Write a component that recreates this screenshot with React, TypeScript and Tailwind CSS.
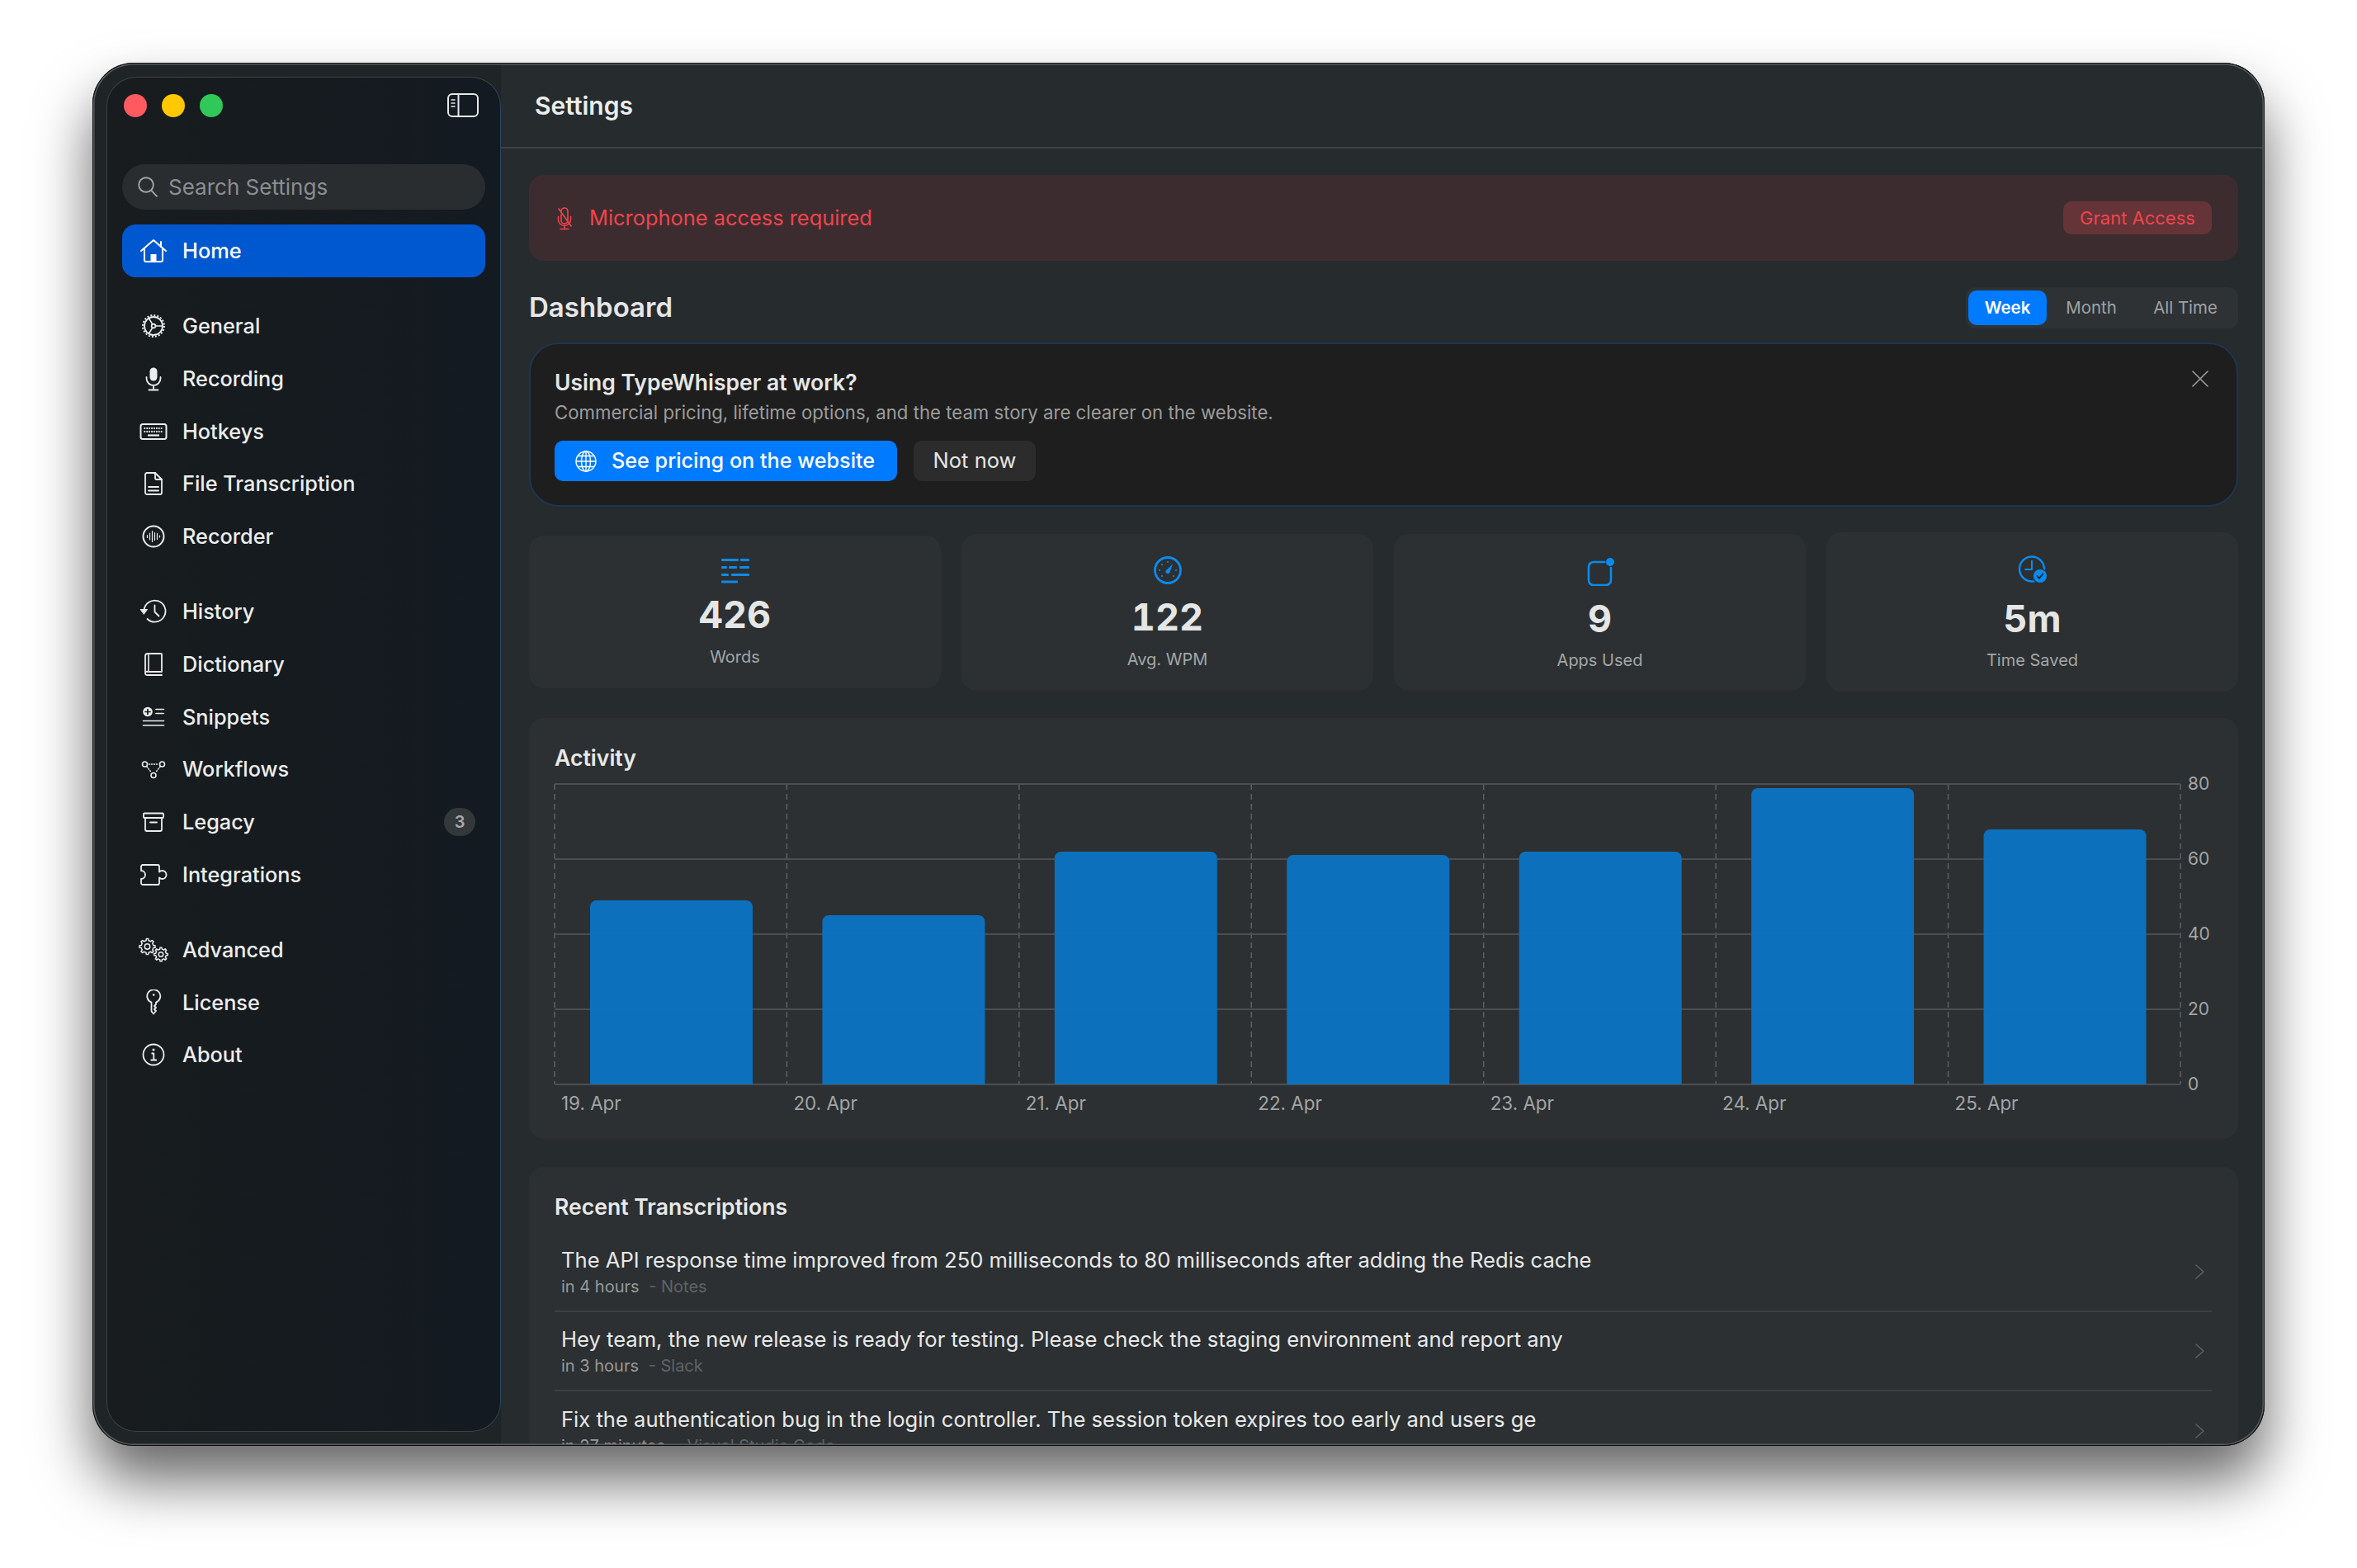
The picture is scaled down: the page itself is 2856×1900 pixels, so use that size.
import type { ReactNode } from "react";

type IconProps = { children: ReactNode };

// SF-symbol style glyphs, all drawn on the same 36x32 canvas
function Glyph({ children }: IconProps) {
  return (
    <svg
      viewBox="0 0 36 32"
      width={36}
      height={32}
      fill="none"
      stroke="currentColor"
      strokeWidth={2}
      strokeLinecap="round"
      strokeLinejoin="round"
      className="shrink-0"
    >
      {children}
    </svg>
  );
}

function gearPath(cx: number, cy: number, outer: number, inner: number, teeth: number) {
  const pts: string[] = [];
  const step = (Math.PI * 2) / teeth;
  for (let i = 0; i < teeth; i++) {
    const a = i * step;
    const corners = [
      [inner, a - step * 0.5],
      [inner, a - step * 0.27],
      [outer, a - step * 0.16],
      [outer, a + step * 0.16],
      [inner, a + step * 0.27],
    ];
    corners.forEach(([r, t]) => {
      pts.push(`${(cx + r * Math.cos(t)).toFixed(2)} ${(cy + r * Math.sin(t)).toFixed(2)}`);
    });
  }
  return `M${pts.join("L")}Z`;
}

const HomeIcon = () => (
  <Glyph>
    <path d="M3 16 18 3l15 13" />
    <path d="M27 5v6" />
    <path d="M7 13v14a2 2 0 0 0 2 2h18a2 2 0 0 0 2-2V13" />
    <rect x="14.5" y="20" width="7" height="9" fill="currentColor" stroke="none" />
  </Glyph>
);
const GeneralIcon = () => (
  <Glyph>
    <circle cx="18" cy="16" r="11" strokeWidth="1.8" />
    <circle cx="18" cy="16" r="13" strokeWidth="2" strokeDasharray="2 2.08" strokeLinecap="butt" />
    <path d="M20.4 16H29M16.8 13.9 12.5 7M16.8 18.1 12.5 25" strokeWidth="1.6" />
    <circle cx="18" cy="16" r="2.4" strokeWidth="1.6" />
  </Glyph>
);
const MicIcon = () => (
  <Glyph>
    <rect x="13.5" y="2.5" width="9" height="16" rx="4.5" fill="currentColor" stroke="none" />
    <path d="M9.5 14v1.5a8.5 8.5 0 0 0 17 0V14M18 24v5M12.5 29.5h11" strokeWidth="1.8" />
  </Glyph>
);
const KeyboardIcon = () => (
  <Glyph>
    <rect x="2.5" y="7" width="31" height="18" rx="2.5" />
    <path d="M6.5 12h23M6.5 16h23" strokeWidth="2.2" strokeDasharray="1.7 1.2" strokeLinecap="butt" />
    <path d="M11 20.5h14" strokeWidth="2.2" strokeLinecap="butt" />
  </Glyph>
);
const DocIcon = () => (
  <Glyph>
    <path d="M10 3h10l8 8v16a2 2 0 0 1-2 2H10a2 2 0 0 1-2-2V5a2 2 0 0 1 2-2Z" strokeWidth="1.8" />
    <path d="M20 3v6a2 2 0 0 0 2 2h6M12 20h12M12 24.5h12" strokeWidth="1.8" />
  </Glyph>
);
const RecorderIcon = () => (
  <Glyph>
    <circle cx="18" cy="16" r="12.5" />
    <path d="M10.5 14.5v3M13.5 12v8M16.5 9.5v13M19.5 11.5v9M22.5 12.5v7M25.5 15v2" strokeWidth="1.2" />
  </Glyph>
);
const HistoryIcon = () => (
  <Glyph>
    <path d="M6.5 15a13 13 0 1 1 4 10" strokeWidth="1.8" />
    <path d="M2.5 13.5h8l-4 5.5Z" fill="currentColor" strokeWidth="1" />
    <path d="M19.5 8.5v8l5 5" strokeWidth="1.8" />
  </Glyph>
);
const BookIcon = () => (
  <Glyph>
    <path d="M8 26V6a3 3 0 0 1 3-3h16a1 1 0 0 1 1 1v21H11a2.2 2.2 0 0 0-3 1Zm0 0a2.5 2.5 0 0 0 3 3h17" strokeWidth="1.8" />
    <path d="M12 3v22" strokeWidth="1.6" />
  </Glyph>
);
const SnippetsIcon = () => (
  <Glyph>
    <circle cx="11" cy="9.5" r="5.8" fill="currentColor" stroke="none" />
    <path d="M11 6.5v6M8 9.5h6" stroke="#161b1e" strokeWidth="1.7" />
    <path d="M21 6.5h9.5M21 11.5h9.5M5.5 20.5h25M5.5 26h25" strokeWidth="1.6" />
  </Glyph>
);
const WorkflowIcon = () => (
  <Glyph>
    <circle cx="7.5" cy="10" r="3" strokeWidth="1.6" />
    <circle cx="28.5" cy="10" r="3" strokeWidth="1.6" />
    <circle cx="18" cy="23.5" r="3" strokeWidth="1.6" />
    <path d="M12.5 10h11M10 13l5.5 7M26 13l-5.5 7" strokeWidth="1.5" strokeDasharray="1 2" />
  </Glyph>
);
const ArchiveIcon = () => (
  <Glyph>
    <rect x="6" y="5.5" width="24" height="5.5" rx="1" strokeWidth="1.8" />
    <path d="M8 11v14a2 2 0 0 0 2 2h16a2 2 0 0 0 2-2V11M14 16.5h8" strokeWidth="1.8" />
  </Glyph>
);
const PuzzleIcon = () => (
  <Glyph>
    <path d="M5 4h18a2 2 0 0 1 2 2v6.5a5 5 0 1 1 0 7V26a2 2 0 0 1-2 2H5a2 2 0 0 1-2-2v-5a5 5 0 0 0 0-10V6a2 2 0 0 1 2-2Z" strokeWidth="1.8" />
  </Glyph>
);
const GearsIcon = () => (
  <Glyph>
    <path d={gearPath(10.5, 12, 9.6, 7.4, 8)} strokeWidth="1.5" />
    <circle cx="10.5" cy="12" r="3.2" strokeWidth="1.5" />
    <path d={gearPath(27, 21.5, 8.4, 6.4, 8)} strokeWidth="1.5" />
    <circle cx="27" cy="21.5" r="2.8" strokeWidth="1.5" />
  </Glyph>
);
const KeyIcon = () => (
  <Glyph>
    <path d="M15.5 15.6a8 8 0 1 1 5.5 0V18l-2 2 2 2-2 2 2 2-3 3.5-2.5-3Z" strokeWidth="1.8" />
    <circle cx="18.2" cy="6.5" r="1.3" fill="currentColor" stroke="none" />
  </Glyph>
);
const InfoIcon = () => (
  <Glyph>
    <circle cx="18" cy="16" r="12.5" strokeWidth="1.8" />
    <circle cx="18" cy="10" r="1.5" fill="currentColor" stroke="none" />
    <path d="M15.5 14.5h2.8v8M14.5 22.5h7.5" strokeWidth="1.8" strokeLinecap="butt" />
  </Glyph>
);

function SidebarToggle() {
  return (
    <svg viewBox="0 0 38 30" width={38} height={30} fill="none" stroke="#e6e7e8" strokeWidth={2}>
      <rect x="1" y="1" width="36" height="27" rx="5" />
      <path d="M13.5 1v27" />
      <path d="M4.5 8h5M4.5 12h5M4.5 16h5" strokeWidth="1.5" />
    </svg>
  );
}

function WordsIcon() {
  const rows: [number, number, number][] = [
    [2, 0, 21],
    [2, 23, 34],
    [11, 0, 7],
    [11, 9, 19],
    [11, 22, 34],
    [20, 0, 9],
    [20, 12, 34],
    [28.5, 0, 20],
  ];
  return (
    <svg viewBox="0 0 34 32" width={34} height={32} fill="#0f8ae6">
      {rows.map(([y, a, b]) => (
        <rect key={`${y}-${a}`} x={a} y={y} width={b - a} height={3} rx={1} />
      ))}
    </svg>
  );
}

function GaugeIcon() {
  return (
    <svg viewBox="0 0 34 34" width={34} height={34} fill="none" stroke="#0a8bf0" strokeWidth={2.8}>
      <circle cx="17" cy="17" r="15.5" />
      <path d="M14.5 19.5c-.6-1 .1-2 .8-2.8L23 9.5 19.3 20c-.8 1.5-3.6 1.6-4.8-.5Z" fill="#0a8bf0" stroke="none" />
      <g fill="#0a8bf0" stroke="none">
        <circle cx="17" cy="7" r="1.1" />
        <circle cx="10" cy="10" r="1.1" />
        <circle cx="7" cy="17" r="1.1" />
        <circle cx="27" cy="17" r="1.1" />
        <circle cx="10" cy="24" r="1.1" />
        <circle cx="24" cy="24" r="1.1" />
      </g>
    </svg>
  );
}

function AppsIcon() {
  return (
    <svg viewBox="0 0 34 34" width={34} height={34} fill="none" stroke="#0a8bf0" strokeWidth={2.6} strokeLinecap="round">
      <path d="M22 5H9a6 6 0 0 0-6 6v16a6 6 0 0 0 6 6h15a6 6 0 0 0 6-6V12" />
      <circle cx="29" cy="5" r="5" fill="#0a8bf0" stroke="none" />
    </svg>
  );
}

function ClockCheckIcon() {
  return (
    <svg viewBox="0 0 36 34" width={36} height={34} fill="none" stroke="#0a8bf0" strokeWidth={2.4} strokeLinecap="round" strokeLinejoin="round">
      <circle cx="17" cy="16.5" r="15" />
      <path d="M17 6.5V17H9" strokeWidth="2" />
      <circle cx="27" cy="25" r="9.5" fill="#2c3032" stroke="none" />
      <circle cx="27" cy="25" r="8" fill="#0a8bf0" stroke="none" />
      <path d="m23.5 25 2.6 2.8 4.2-5.4" stroke="#1d2a36" strokeWidth="1.8" />
    </svg>
  );
}

function MicSlash() {
  return (
    <svg viewBox="0 0 24 30" width={24} height={30} fill="none" stroke="#f0444c" strokeWidth={1.6} strokeLinecap="round" className="shrink-0">
      <path d="M8 8V7a4 4 0 0 1 8 0v11a4 4 0 0 1-8 0v-7" />
      <path d="M4.5 13.5V17a7.5 7.5 0 0 0 15 0v-3.5M12 24.5V28M7 28.5h10" />
      <path d="m5 4 15 21" />
    </svg>
  );
}

function GlobeIcon() {
  return (
    <svg viewBox="0 0 26 26" width={26} height={26} fill="none" stroke="#fff" strokeWidth={1.4} className="shrink-0">
      <circle cx="13" cy="13" r="12" />
      <ellipse cx="13" cy="13" rx="5.5" ry="12" />
      <path d="M13 1v24M1 13h24M3 6.5h20M3 19.5h20" />
    </svg>
  );
}

const NAV_GROUPS: { label: string; icon: ReactNode; badge?: string }[][] = [
  [
    { label: "General", icon: <GeneralIcon /> },
    { label: "Recording", icon: <MicIcon /> },
    { label: "Hotkeys", icon: <KeyboardIcon /> },
    { label: "File Transcription", icon: <DocIcon /> },
    { label: "Recorder", icon: <RecorderIcon /> },
  ],
  [
    { label: "History", icon: <HistoryIcon /> },
    { label: "Dictionary", icon: <BookIcon /> },
    { label: "Snippets", icon: <SnippetsIcon /> },
    { label: "Workflows", icon: <WorkflowIcon /> },
    { label: "Legacy", icon: <ArchiveIcon />, badge: "3" },
    { label: "Integrations", icon: <PuzzleIcon /> },
  ],
  [
    { label: "Advanced", icon: <GearsIcon /> },
    { label: "License", icon: <KeyIcon /> },
    { label: "About", icon: <InfoIcon /> },
  ],
];

function Sidebar() {
  return (
    <aside className="ml-[17px] mt-[17px] flex h-[1642px] w-[478px] shrink-0 flex-col rounded-[36px] border border-[#3b4146] border-r-[#2c4560] bg-linear-to-r from-[#181c1e] to-[#131a21] px-[18px] pt-[19px]">
      <div className="flex h-[30px] items-center justify-between pl-[2px] pr-[8px]">
        <div className="flex gap-[18px]">
          <span className="h-[28px] w-[28px] rounded-full bg-[#ff5a5f]" />
          <span className="h-[28px] w-[28px] rounded-full bg-[#ffc800]" />
          <span className="h-[28px] w-[28px] rounded-full bg-[#30c859]" />
        </div>
        <SidebarToggle />
      </div>

      <div className="mt-[56px] flex h-[55px] items-center gap-[13px] rounded-full bg-[#2a2d30] pl-[19px] text-[26px] text-[#8b8e90]">
        <svg viewBox="0 0 24 25" width={24} height={25} fill="none" stroke="#a3a5a7" strokeWidth={1.9} strokeLinecap="round">
          <circle cx="10" cy="10" r="8.8" />
          <path d="m16.5 16.8 6.5 7" />
        </svg>
        <span>Search Settings</span>
      </div>

      <div className="mt-[18px] flex h-[64px] items-center gap-[17px] rounded-[16px] bg-[#0058d0] pl-[20px] text-[25.4px] font-medium text-white">
        <HomeIcon />
        <span>Home</span>
      </div>

      {NAV_GROUPS.map((group) => (
        <nav key={group[0].label} className="mt-[27.5px] flex flex-col">
          {group.map((item) => (
            <div key={item.label} className="flex h-[63.7px] items-center gap-[17px] pl-[20px] pr-[12px] text-[25.3px] font-medium text-[#eceeee]">
              {item.icon}
              <span>{item.label}</span>
              {item.badge ? (
                <span className="ml-auto flex h-[34px] w-[38px] items-center justify-center rounded-full bg-[#33383b] text-[20px] font-semibold text-[#a9abad]">
                  {item.badge}
                </span>
              ) : null}
            </div>
          ))}
        </nav>
      ))}
    </aside>
  );
}

function StatCard({
  icon,
  value,
  label,
  shell,
  iconBox,
  valueGap,
  labelGap,
}: {
  icon: ReactNode;
  value: string;
  label: string;
  shell: string;
  iconBox: string;
  valueGap: string;
  labelGap: string;
}) {
  return (
    <div className={`flex flex-1 flex-col items-center rounded-[18px] bg-[#2c3032] ${shell}`}>
      <div className={`flex items-center justify-center ${iconBox}`}>{icon}</div>
      <div className={`h-[44px] text-[45px] font-bold leading-[44px] tabular-nums text-[#e5e6e6] ${valueGap}`}>{value}</div>
      <div className={`h-[30px] text-[20px] leading-[30px] text-[#a4a6a7] ${labelGap}`}>{label}</div>
    </div>
  );
}

const BAR_TOPS = [142, 160, 83, 87, 83, 6, 56];
const TICKS = ["80", "60", "40", "20", "0"];
const DAYS = ["19. Apr", "20. Apr", "21. Apr", "22. Apr", "23. Apr", "24. Apr", "25. Apr"];
const SLOT = 281.43;

function ActivityChart() {
  return (
    <div className="mt-[15px]">
      <div className="flex gap-[8px]">
        <svg viewBox="0 0 1972 366" width={1972} height={366} className="-ml-px shrink-0">
          {[0, 1, 2, 3, 4, 5, 6, 7].map((i) => (
            <line key={i} x1={1 + i * SLOT} x2={1 + i * SLOT} y1={1} y2={365} stroke="#5d6163" strokeWidth={1.5} strokeDasharray="7 5" />
          ))}
          {[0, 1, 2, 3, 4].map((i) => (
            <line key={i} x1={1} x2={1971} y1={1 + i * 91} y2={1 + i * 91} stroke="#4b4f52" strokeWidth={2} />
          ))}
          {BAR_TOPS.map((top, i) => {
            const x = 44 + i * SLOT;
            return (
              <path
                key={i}
                d={`M${x} 365V${top + 8}a8 8 0 0 1 8-8h181a8 8 0 0 1 8 8V365Z`}
                fill="#0c72c2"
                fillOpacity={0.96}
              />
            );
          })}
        </svg>
        <div className="-my-[14px] flex h-[394px] flex-col justify-between text-[21px] leading-[30px] text-[#a3a5a6]">
          {TICKS.map((tick) => (
            <span key={tick}>{tick}</span>
          ))}
        </div>
      </div>
      <div className="mt-[7px] flex text-[22.4px] leading-[30px] text-[#a3a5a6]">
        {DAYS.map((day) => (
          <span key={day} className="w-[281.43px] pl-[8px]">
            {day}
          </span>
        ))}
      </div>
    </div>
  );
}

const RECENT = [
  {
    text: "The API response time improved from 250 milliseconds to 80 milliseconds after adding the Redis cache",
    when: "in 4 hours",
    app: "Notes",
  },
  {
    text: "Hey team, the new release is ready for testing. Please check the staging environment and report any",
    when: "in 3 hours",
    app: "Slack",
  },
  {
    text: "Fix the authentication bug in the login controller. The session token expires too early and users ge",
    when: "in 27 minutes",
    app: "Visual Studio Code",
  },
];

export default function App() {
  return (
    <div className="h-[1900px] w-[2856px] overflow-hidden bg-white pl-[112px] pt-[76px] antialiased [font-family:Inter,sans-serif]">
      <div className="relative flex h-[1676px] w-[2632px] rounded-[50px] bg-[#1f2426] shadow-[0_42px_70px_rgba(0,0,0,0.6)]">
        <div className="flex h-full w-full overflow-hidden rounded-[50px]">
          <Sidebar />

          <main className="flex min-w-0 flex-1 flex-col bg-[#262b2e]">
            <header className="flex h-[104px] shrink-0 items-center border-b-2 border-[#3f4346] pl-[41px] pt-[2px] text-[30px] font-semibold text-[#eceded]">
              Settings
            </header>

            <div className="flex flex-col pl-[34px] pr-[32px] pt-[32px]">
              <div className="flex h-[104px] items-center rounded-[18px] bg-[#3d2c2f] pl-[31px] pr-[32px]">
                <MicSlash />
                <span className="ml-[18px] text-[25.4px] text-[#f0444c]">Microphone access required</span>
                <button className="ml-auto h-[40px] w-[180px] rounded-[10px] bg-[#653438] text-[22px] text-[#f0444c]">
                  Grant Access
                </button>
              </div>

              <div className="mt-[32px] flex h-[50px] items-center justify-between">
                <h1 className="text-[33px] font-semibold text-[#e5e6e6]">Dashboard</h1>
                <div className="flex h-[50px] w-[330px] items-center rounded-[12px] bg-[#2e3235] pl-[3px] text-[20.4px] text-[#a0a2a4]">
                  <span className="flex h-[42px] w-[95px] items-center justify-center rounded-[10px] bg-[#007aff] font-semibold text-white">Week</span>
                  <span className="w-[108px] text-center">Month</span>
                  <span className="w-[120px] text-center">All Time</span>
                </div>
              </div>

              <section className="relative mt-[17px] h-[199px] rounded-[36px] border-2 border-[#1e3551] bg-[#1e1e1e] pl-[29px] pt-[28px]">
                <h2 className="h-[36px] text-[26.5px] font-semibold leading-[36px] text-[#e6e7e7]">Using TypeWhisper at work?</h2>
                <p className="mt-[3px] h-[32px] text-[22.2px] leading-[32px] text-[#9c9c9c]">
                  Commercial pricing, lifetime options, and the team story are clearer on the website.
                </p>
                <div className="mt-[18px] flex gap-[20px]">
                  <button className="flex h-[49px] w-[415px] items-center gap-[18px] rounded-[10px] bg-[#007aff] pl-[25px] text-[25.2px] font-medium text-white">
                    <GlobeIcon />
                    See pricing on the website
                  </button>
                  <button className="h-[49px] w-[148px] rounded-[10px] bg-[#2c2c2c] text-[25.5px] text-[#e6e6e6]">Not now</button>
                </div>
                <svg viewBox="0 0 20 20" width={20} height={20} stroke="#9d9d9d" strokeWidth={1.6} strokeLinecap="round" className="absolute right-[34px] top-[32px]">
                  <path d="m1 1 18 18M19 1 1 19" />
                </svg>
              </section>

              <div className="mt-[31px] flex h-[193px] items-center gap-[25px]">
                <StatCard icon={<WordsIcon />} value="426" label="Words" shell="h-[185px] pt-[27px]" iconBox="h-[30px]" valueGap="mt-[17px]" labelGap="mt-[14px]" />
                <StatCard icon={<GaugeIcon />} value="122" label="Avg. WPM" shell="h-[190px] pt-[27px]" iconBox="h-[34px]" valueGap="mt-[18px]" labelGap="mt-[14px]" />
                <StatCard icon={<AppsIcon />} value="9" label="Apps Used" shell="h-[190px] pt-[29px]" iconBox="h-[34px]" valueGap="mt-[18px]" labelGap="mt-[13px]" />
                <StatCard icon={<ClockCheckIcon />} value="5m" label="Time Saved" shell="h-[193px] pt-[28px]" iconBox="h-[34px]" valueGap="mt-[21px]" labelGap="mt-[13px]" />
              </div>

              <section className="mt-[32px] h-[510px] rounded-[18px] bg-[#2c3032] pl-[31px] pt-[32px]">
                <h2 className="h-[32px] text-[26.6px] font-semibold leading-[32px] text-[#e8e9e9]">Activity</h2>
                <ActivityChart />
              </section>

              <section className="mt-[34px] h-[400px] rounded-t-[18px] bg-[#2c3032] pl-[31px] pr-[32px] pt-[30px]">
                <h2 className="h-[36px] text-[26.6px] font-semibold leading-[36px] text-[#e8e9e9]">Recent Transcriptions</h2>
                <div className="mt-[14px] flex flex-col">
                  {RECENT.map((row, i) => (
                    <div key={row.when} className={`flex h-[96px] items-center justify-between pl-[8px] pr-[9px] ${i < 2 ? "border-b-2 border-[#3c4043]" : ""}`}>
                      <div className="flex flex-col">
                        <div className="h-[34px] text-[25.6px] leading-[34px] text-[#e8e9e9]">{row.text}</div>
                        <div className="mt-[2px] h-[26px] text-[20px] leading-[26px] text-[#98999a]">
                          {row.when} <span className="ml-[6px] text-[#5f6366]">- {row.app}</span>
                        </div>
                      </div>
                      <svg viewBox="0 0 11 18" width={11} height={18} fill="none" stroke="#5c6063" strokeWidth={1.6} strokeLinecap="round" strokeLinejoin="round">
                        <path d="m1 1 9 8-9 8" />
                      </svg>
                    </div>
                  ))}
                </div>
              </section>
            </div>
          </main>
        </div>
        <div className="pointer-events-none absolute inset-0 rounded-[50px] shadow-[inset_0_0_0_1px_#0a0a0a,inset_0_0_0_2.5px_#585c5f]" />
      </div>
    </div>
  );
}
